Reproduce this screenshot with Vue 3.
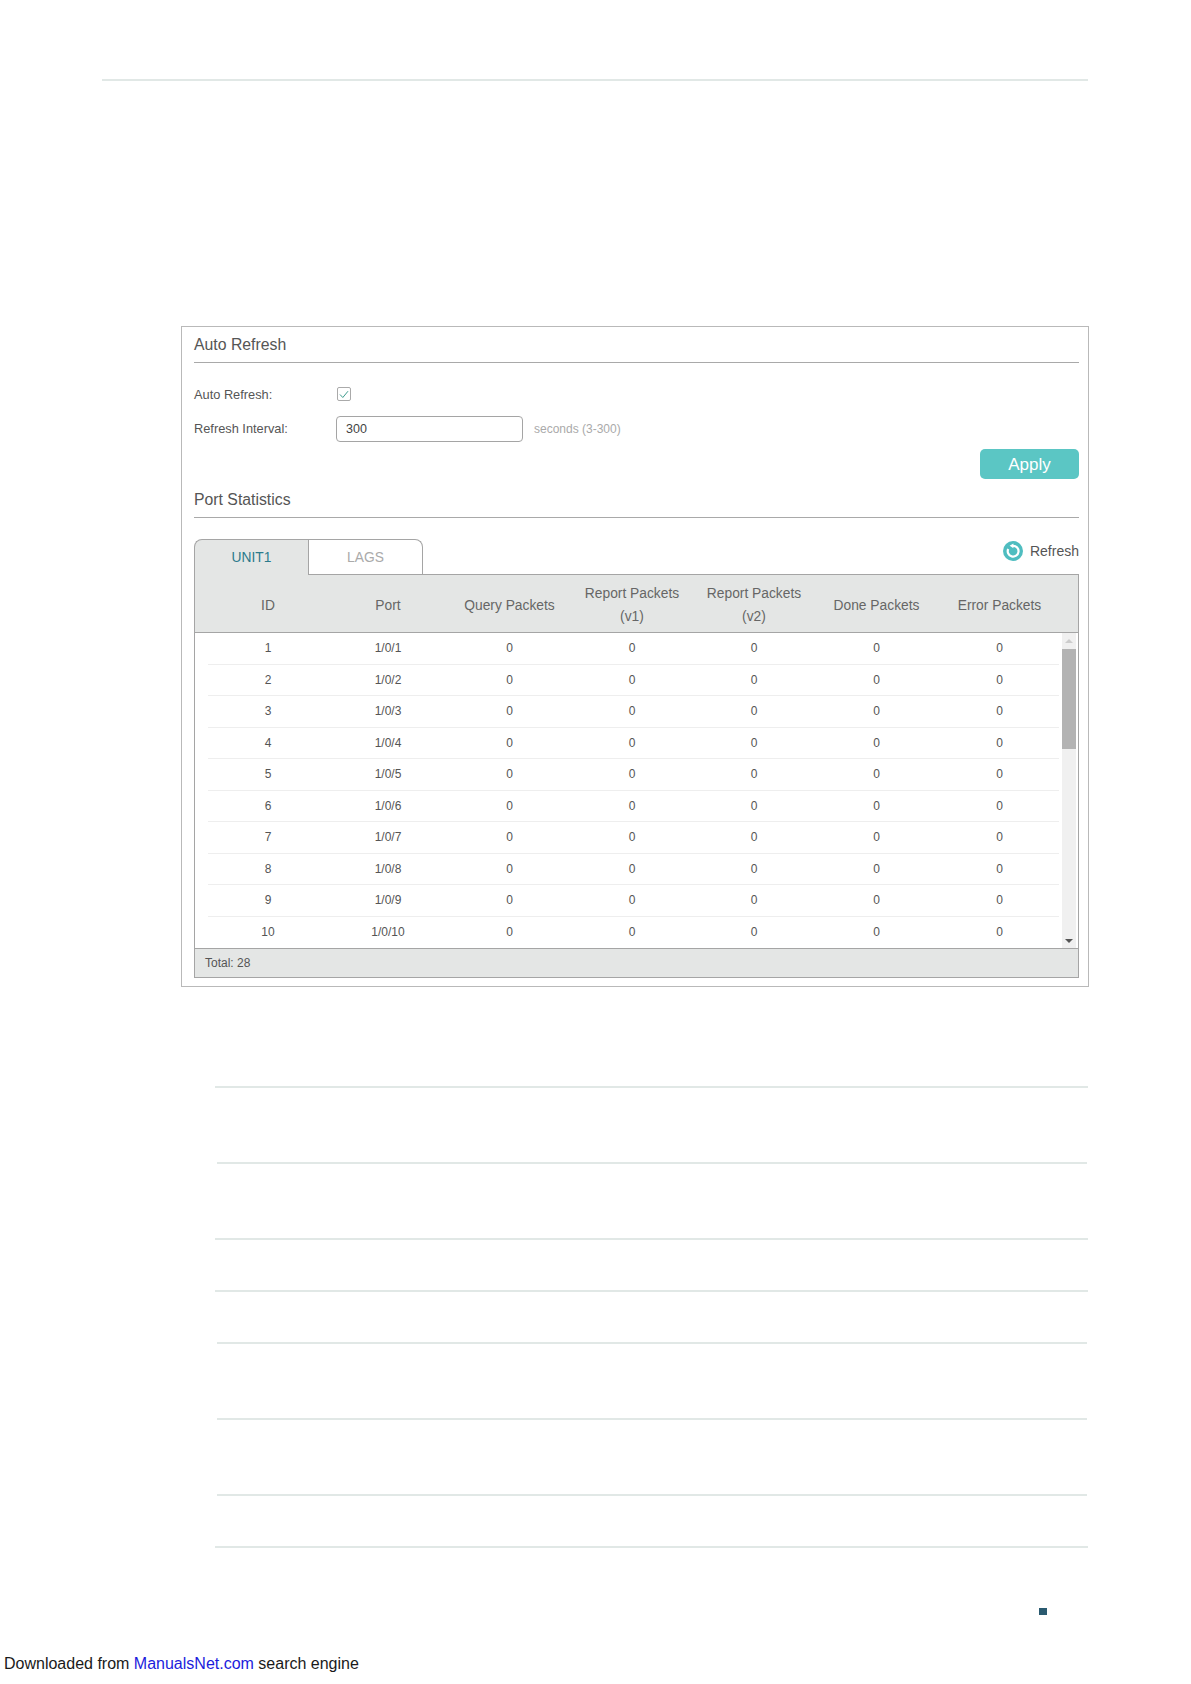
<script setup>
const rows = Array.from({ length: 10 }, (_, i) => ({ id: i + 1, port: `1/0/${i + 1}` }))
const rules = [
  { h: 76, inset: false },
  { h: 76, inset: true },
  { h: 52, inset: false },
  { h: 52, inset: false },
  { h: 76, inset: true },
  { h: 76, inset: true },
  { h: 52, inset: true },
]
</script>

<template>
  <div class="page">
    <div class="top-rule"></div>

    <section class="panel">
      <h2 class="title">Auto Refresh</h2>
      <div class="form-row first">
        <label class="label">Auto Refresh:</label>
        <span class="check">
          <svg width="10" height="9" viewBox="0 0 10 9"><path d="M1 4.5 L3.8 7.5 L9 1.2" fill="none" stroke="#3f9d8f" stroke-width="1"/></svg>
        </span>
      </div>
      <div class="form-row second">
        <label class="label shifted">Refresh Interval:</label>
        <div class="input">300</div>
        <span class="hint">seconds (3-300)</span>
      </div>
      <div class="apply-row"><button class="apply">Apply</button></div>

      <h2 class="title stats">Port Statistics</h2>

      <div class="tab-row">
        <div class="tabs">
          <div class="tab active">UNIT1</div>
          <div class="tab">LAGS</div>
        </div>
        <div class="refresh">
          <svg width="20" height="20" viewBox="0 0 20 20">
            <circle cx="10" cy="10" r="10" fill="#4fbdc0"/>
            <path d="M5.2 8 A5.4 5.4 0 1 0 10 4.8" fill="none" stroke="#fff" stroke-width="2.2"/>
            <path d="M10.4 2.4 L10.4 7.2 L6.6 4.8 Z" fill="#fff"/>
          </svg>
          <span>Refresh</span>
        </div>
      </div>

      <div class="table">
        <div class="head grid">
          <div>ID</div>
          <div>Port</div>
          <div>Query Packets</div>
          <div>Report Packets<br>(v1)</div>
          <div>Report Packets<br>(v2)</div>
          <div>Done Packets</div>
          <div>Error Packets</div>
        </div>
        <div class="body">
          <div v-for="r in rows" :key="r.id" class="row grid">
            <div>{{ r.id }}</div>
            <div>{{ r.port }}</div>
            <div v-for="c in 5" :key="c">0</div>
          </div>
          <div class="scrollbar">
            <span class="arrow up"></span>
            <span class="thumb"></span>
            <span class="arrow down"></span>
          </div>
        </div>
        <div class="foot">Total: 28</div>
      </div>
    </section>

    <div class="rules">
      <div v-for="(r, i) in rules" :key="i" class="rule-row" :class="{ inset: r.inset }" :style="{ height: r.h + 'px' }"></div>
      <div class="rule-row end"></div>
    </div>

    <div class="mark-row"><span class="mark"></span></div>

    <footer class="footer">Downloaded from <a class="link">ManualsNet.com</a> search engine</footer>
  </div>
</template>

<style>
html, body { margin: 0; background: #fff; }
</style>

<style scoped>
.page {
  width: 1191px;
  height: 1684px;
  overflow: hidden;
  background: #fff;
  font-family: "Liberation Sans", Arial, sans-serif;
  color: #555;
  padding-top: 79px;
  box-sizing: border-box;
}
.top-rule {
  width: 986px;
  height: 2px;
  margin-left: 102px;
  background: #e1e8e6;
}
.panel {
  box-sizing: border-box;
  width: 908px;
  height: 661px;
  margin: 245px 0 0 181px;
  border: 1px solid #b9b9b9;
  padding: 0 9px 0 12px;
}
.title {
  margin: 0;
  height: 35px;
  line-height: 36px;
  font-size: 15.8px;
  font-weight: 400;
  color: #555;
  border-bottom: 1px solid #a9a9a9;
}
.form-row { display: flex; align-items: center; font-size: 12.8px; }
.form-row.first { height: 26px; margin-top: 18px; }
.form-row.second { height: 26px; margin-top: 9px; }
.label { width: 142px; color: #555; }
.label.shifted { padding-bottom: 2px; }
.check {
  box-sizing: border-box;
  width: 14px;
  height: 14px;
  margin-left: 1px;
  border: 1px solid #aaa;
  border-radius: 2px;
  display: flex;
  align-items: center;
  justify-content: center;
}
.input {
  box-sizing: border-box;
  width: 187px;
  height: 26px;
  border: 1px solid #a5a5a5;
  border-radius: 4px;
  padding-left: 9px;
  line-height: 24px;
  font-size: 12.5px;
  color: #444;
}
.hint { margin-left: 11px; font-size: 12px; color: #aaa; }
.apply-row { display: flex; justify-content: flex-end; margin-top: 7px; }
.apply {
  width: 99px;
  height: 30px;
  border: 0;
  border-radius: 5px;
  background: #5bc6c4;
  color: #fff;
  font-family: inherit;
  font-size: 17px;
  padding: 2px 0 0;
}
.title.stats { margin-top: 3px; }
.tab-row { display: flex; justify-content: space-between; margin-top: 21px; height: 35px; }
.tabs { display: flex; z-index: 1; height: 36px; }
.tab {
  box-sizing: border-box;
  width: 115px;
  height: 35px;
  border: 1px solid #a5a5a5;
  border-bottom: 0;
  border-top-right-radius: 8px;
  text-align: center;
  line-height: 35px;
  font-size: 13.8px;
  color: #aaa;
}
.tab.active {
  width: 114px;
  height: 36px;
  border-right: 0;
  border-top-right-radius: 0;
  border-top-left-radius: 8px;
  background: #e4e6e5;
  color: #2b7a8c;
}
.refresh {
  display: flex;
  align-items: center;
  gap: 6px;
  height: 24px;
  font-size: 14px;
  color: #555;
}
.refresh svg { margin-right: 1px; }
.table {
  box-sizing: border-box;
  width: 885px;
  border: 1px solid #a5a5a5;
}
.grid {
  display: grid;
  grid-template-columns: 120px 120px 123px 122px 122px 123px 123px;
  text-align: center;
}
.head {
  height: 58px;
  padding: 3px 0 0 13px;
  background: #e4e6e5;
  border-bottom: 1px solid #a5a5a5;
  box-sizing: border-box;
  align-items: center;
  font-size: 13.8px;
  line-height: 23px;
  color: #666;
}
.body { position: relative; }
.row {
  height: 31.5px;
  box-sizing: border-box;
  margin-left: 13px;
  width: 851px;
  border-bottom: 1px solid #eeeeee;
  align-items: center;
  font-size: 12px;
  color: #555;
}
.row:nth-last-child(2) { border-bottom: 0; }
.scrollbar {
  position: absolute;
  top: 0;
  bottom: 0;
  right: 2px;
  width: 14px;
  background: #f0f0f0;
  display: flex;
  flex-direction: column;
  align-items: center;
}
.arrow { width: 0; height: 0; border-left: 4px solid transparent; border-right: 4px solid transparent; }
.arrow.up { border-bottom: 4px solid #ccc; margin-top: 6px; }
.thumb { width: 14px; height: 100px; background: #b3b3b3; margin-top: 6px; }
.arrow.down { border-top: 4px solid #555; margin-top: auto; margin-bottom: 5px; }
.foot {
  height: 29px;
  box-sizing: border-box;
  padding-left: 10px;
  background: #e4e6e5;
  border-top: 1px solid #a5a5a5;
  font-size: 12px;
  line-height: 28px;
  color: #555;
}
.rules { margin: 99px 0 0 215px; width: 873px; }
.rule-row { box-sizing: border-box; border-top: 2px solid #e1e8e6; }
.rule-row.inset { margin: 0 1px 0 2px; }
.rule-row.end { height: 2px; }
.mark-row { display: flex; justify-content: flex-start; margin: 60px 0 0 1039px; }
.mark { width: 8px; height: 7px; background: #2a5a70; }
.footer {
  margin: 39px 0 0 4px;
  font-size: 16px;
  line-height: 20px;
  color: #1a1a1a;
  white-space: nowrap;
}
.link { color: #1c1cdc; }
</style>
